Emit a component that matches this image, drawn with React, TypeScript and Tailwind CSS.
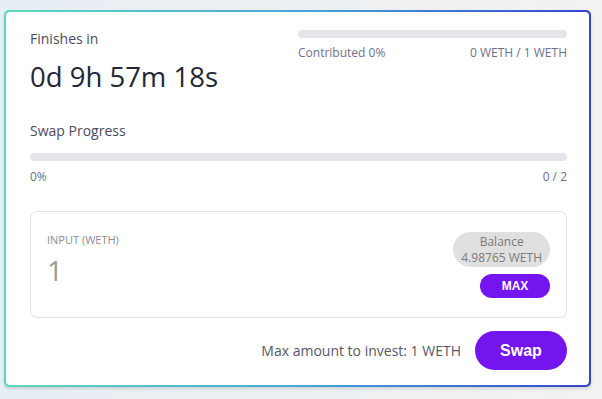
export default function App() {
  return (
    <div className="min-h-[399px] w-full bg-gradient-to-r from-[#e7eef4] to-[#f2f2f0] pl-[4px] pr-[11px] pt-[10px] pb-[11px] font-['Open_Sans',sans-serif]">
      {/* Gradient border card */}
      <div className="rounded-[5px] bg-gradient-to-r from-[#5ed8bb] via-[#48a7d6] to-[#3843cf] p-[2px] shadow-[0_2px_3px_rgba(0,0,0,0.12)]">
        <div className="rounded-[4px] bg-white pl-[24px] pr-[22px] pb-[15px] pt-[17px]">
          {/* Header */}
          <div className="flex items-start justify-between">
            <div>
              <div className="text-[14px] leading-[20px] text-[#4b4b5c]">Finishes in</div>
              <div className="mt-[12px] text-[27.5px] font-medium leading-[32px] text-[#242637]">0d 9h 57m 18s</div>
            </div>
            <div className="w-[269px] pt-[1px]">
              <div className="h-[8px] rounded-full bg-[#e5e5eb]" />
              <div className="mt-[7px] flex justify-between text-[12px] font-medium leading-[16px] text-[#6c7090]">
                <span>Contributed 0%</span>
                <span>0 WETH / 1 WETH</span>
              </div>
            </div>
          </div>

          {/* Swap progress */}
          <div className="mt-[28px] text-[14px] leading-[20px] text-[#4b4b5c]">Swap Progress</div>
          <div className="mt-[12px] h-[8px] rounded-full bg-[#e5e5eb]" />
          <div className="mt-[8px] flex justify-between text-[12px] font-medium leading-[16px] text-[#6c7090]">
            <span>0%</span>
            <span>0 / 2</span>
          </div>

          {/* Input box */}
          <div className="mt-[26px] flex items-start justify-between rounded-[7px] border border-[#e2e1ee] pb-[19px] pl-[16px] pr-[16px] pt-[20px]">
            <div>
              <div className="text-[11px] leading-[16px] text-[#8c8c98]">INPUT (WETH)</div>
              <div className="mt-[6px] text-[28px] leading-[32px] text-[#9a9a9a]">1</div>
            </div>
            <div className="flex flex-col items-end">
              <div className="rounded-full bg-[#e0e0e0] px-[8px] py-[1.5px] text-center text-[12px] leading-[16px] text-[#7a7a7a]">
                <div>Balance</div>
                <div>4.98765 WETH</div>
              </div>
              <button className="mt-[7px] h-[24px] w-[70px] rounded-full bg-[#7414ef] font-['Liberation_Sans',sans-serif] text-[12px] font-bold text-white">
                MAX
              </button>
            </div>
          </div>

          {/* Footer */}
          <div className="mt-[13px] flex items-center justify-end gap-[14px]">
            <span className="text-[14px] text-[#555867]">Max amount to invest: 1 WETH</span>
            <button className="h-[39px] w-[92px] rounded-full bg-[#7414ef] font-['Liberation_Sans',sans-serif] text-[16px] font-bold text-white">
              Swap
            </button>
          </div>
        </div>
      </div>
    </div>
  )
}
